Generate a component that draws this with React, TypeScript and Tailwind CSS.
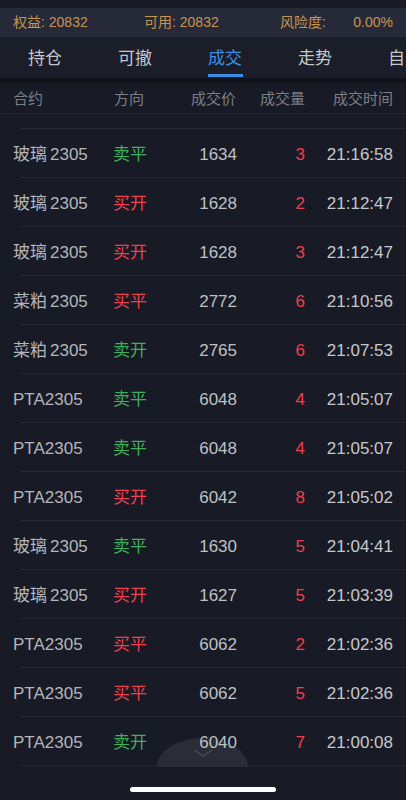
import React from "react";

type Trade = {
  name: string;
  code: string;
  dir: string;
  price: string;
  qty: string;
  time: string;
};

const trades: Trade[] = [
  { name: "玻璃", code: "2305", dir: "卖平", price: "1634", qty: "3", time: "21:16:58" },
  { name: "玻璃", code: "2305", dir: "买开", price: "1628", qty: "2", time: "21:12:47" },
  { name: "玻璃", code: "2305", dir: "买开", price: "1628", qty: "3", time: "21:12:47" },
  { name: "菜粕", code: "2305", dir: "买平", price: "2772", qty: "6", time: "21:10:56" },
  { name: "菜粕", code: "2305", dir: "卖开", price: "2765", qty: "6", time: "21:07:53" },
  { name: "PTA", code: "2305", dir: "卖平", price: "6048", qty: "4", time: "21:05:07" },
  { name: "PTA", code: "2305", dir: "卖平", price: "6048", qty: "4", time: "21:05:07" },
  { name: "PTA", code: "2305", dir: "买开", price: "6042", qty: "8", time: "21:05:02" },
  { name: "玻璃", code: "2305", dir: "卖平", price: "1630", qty: "5", time: "21:04:41" },
  { name: "玻璃", code: "2305", dir: "买开", price: "1627", qty: "5", time: "21:03:39" },
  { name: "PTA", code: "2305", dir: "买平", price: "6062", qty: "2", time: "21:02:36" },
  { name: "PTA", code: "2305", dir: "买平", price: "6062", qty: "5", time: "21:02:36" },
  { name: "PTA", code: "2305", dir: "卖开", price: "6040", qty: "7", time: "21:00:08" },
];

const tabs = ["持仓", "可撤", "成交", "走势", "自选"];

const font = "font-['Liberation_Sans','Noto_Sans_CJK_SC',sans-serif]";

export default function App() {
  return (
    <div className={`relative w-[406px] h-[800px] overflow-hidden bg-[#181b25] ${font}`}>
      <div className="h-[8px] bg-[#181b25]" />

      {/* account bar */}
      <div className="h-[29px] bg-[#262a38] flex items-center px-[13px] text-[14px] text-[#c9944f]">
        <span className="w-[131px]">权益: 20832</span>
        <span className="w-[136px]">可用: 20832</span>
        <span className="w-[73px]">风险度:</span>
        <span className="flex-1 text-right">0.00%</span>
      </div>

      {/* tabs */}
      <div className="h-[41px] bg-[#1b1e29] flex overflow-hidden">
        {tabs.map((t) => (
          <div key={t} className="relative w-[90px] shrink-0 flex justify-center pt-[10px]">
            <span
              className={`text-[17px] leading-[24px] ${t === "成交" ? "text-[#3a8ee6]" : "text-[#c4c6cc]"}`}
            >
              {t}
            </span>
            {t === "成交" && (
              <div className="absolute left-[28px] top-[37px] w-[35px] h-[3px] bg-[#3a8ee6]" />
            )}
          </div>
        ))}
      </div>

      <div className="h-[5px] bg-[#11131a]" />

      {/* header */}
      <div className="h-[31px] flex items-center pt-[2px] text-[15px] text-[#7b7e86] border-b border-[#262933]">
        <span className="w-[113px] pl-[13px]">合约</span>
        <span className="w-[50px] pl-[1px]">方向</span>
        <span className="w-[74px] text-right pr-[1px]">成交价</span>
        <span className="w-[69px] text-right pr-[1px]">成交量</span>
        <span className="w-[87px] text-right">成交时间</span>
      </div>

      <div className="h-[14px]" />

      {/* rows */}
      <div className="relative z-[1]">
        <div className="border-t border-[#262933] ml-[20px]" />
        {trades.map((tr, i) => (
          <div key={i}>
            <div className="h-[48px] flex items-center pt-[4px] text-[17px]">
              <span className="w-[113px] pl-[13px] text-[#b3b5bb]">
                {tr.name}
                <span className={tr.name === "PTA" ? "" : "ml-[3px]"}>{tr.code}</span>
              </span>
              <span
                className={`w-[50px] ${tr.dir.startsWith("卖") ? "text-[#3fb05a]" : "text-[#ee3f4d]"}`}
              >
                {tr.dir}
              </span>
              <span className="w-[74px] text-right text-[#bfc0c4]">{tr.price}</span>
              <span className="w-[69px] text-right pr-[1px] text-[#ee3f4d]">{tr.qty}</span>
              <span className="w-[87px] text-right text-[#c6c7cb]">{tr.time}</span>
            </div>
            <div className="border-t border-[#262933] ml-[20px]" />
          </div>
        ))}
      </div>

      {/* pull-up handle */}
      <div className="absolute z-0 left-[157px] top-[738px] w-[91px] h-[29px] rounded-t-[46px_29px] bg-[#2a2d37] flex justify-center pt-[10px]">
        <svg width="22" height="10" viewBox="0 0 22 10" fill="none">
          <path d="M2 2 L11 8 L20 2" stroke="#4a4d56" strokeWidth="1.5" />
        </svg>
      </div>

      {/* home indicator */}
      <div className="absolute z-[2] left-[130px] top-[787px] w-[146px] h-[5px] rounded-full bg-white" />
    </div>
  );
}
